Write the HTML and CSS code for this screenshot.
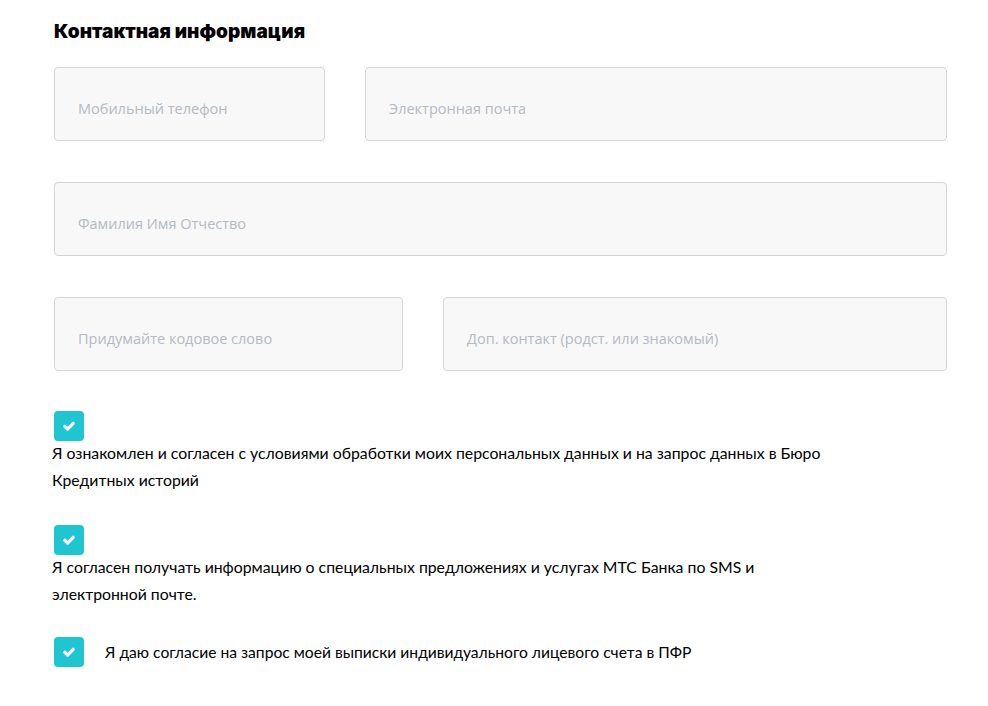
FILE: index.html
```html
<!DOCTYPE html>
<html lang="ru">
<head>
<meta charset="utf-8">
<link rel="stylesheet" href="styles.css">
</head>
<body>
<div class="page">
  <h2 class="title">Контактная информация</h2>
  <div class="row row-1">
    <div class="field"><span class="ph">Мобильный телефон</span></div>
    <div class="field"><span class="ph">Электронная почта</span></div>
  </div>
  <div class="row row-2">
    <div class="field"><span class="ph">Фамилия Имя Отчество</span></div>
  </div>
  <div class="row row-3">
    <div class="field"><span class="ph">Придумайте кодовое слово</span></div>
    <div class="field"><span class="ph">Доп. контакт (родст. или знакомый)</span></div>
  </div>

  <div class="check check-block c1">
    <span class="box"><svg viewBox="0 0 30 30" width="30" height="30"><path d="M10.8 15.3l2.8 2.8 5.6-5.8" fill="none" stroke="#fff" stroke-width="3.2" stroke-linecap="round" stroke-linejoin="round"/></svg></span>
    <p class="label">Я ознакомлен и согласен с условиями обработки моих персональных данных и на запрос данных в Бюро<br>Кредитных историй</p>
  </div>
  <div class="check check-block c2">
    <span class="box"><svg viewBox="0 0 30 30" width="30" height="30"><path d="M10.8 15.3l2.8 2.8 5.6-5.8" fill="none" stroke="#fff" stroke-width="3.2" stroke-linecap="round" stroke-linejoin="round"/></svg></span>
    <p class="label">Я согласен получать информацию о специальных предложениях и услугах МТС Банка по SMS и<br>электронной почте.</p>
  </div>
  <div class="check check-inline c3">
    <span class="box"><svg viewBox="0 0 30 30" width="30" height="30"><path d="M10.8 15.3l2.8 2.8 5.6-5.8" fill="none" stroke="#fff" stroke-width="3.2" stroke-linecap="round" stroke-linejoin="round"/></svg></span>
    <p class="label">Я даю согласие на запрос моей выписки индивидуального лицевого счета в ПФР</p>
  </div>
</div>
</body>
</html>
```

FILE: styles.css
```css
html, body {
  margin: 0;
  padding: 0;
  background: #fff;
}
.page {
  padding: 20px 41px 0 54px;
  font-family: Lato, "Open Sans", sans-serif;
  color: #000;
}
.title {
  margin: 0 0 23px;
  font-family: Inter, "DejaVu Sans", sans-serif;
  font-weight: 900;
  font-size: 19px;
  line-height: 24px;
  letter-spacing: 0.05px;
}
.row {
  display: grid;
  column-gap: 40px;
  margin-bottom: 41px;
}
.row-1 { grid-template-columns: 271px 1fr; }
.row-2 { grid-template-columns: 1fr; }
.row-3 { grid-template-columns: 349px 1fr; margin-bottom: 40px; }
.field {
  box-sizing: border-box;
  height: 74px;
  border: 1px solid #d3d5d8;
  border-radius: 4px;
  background: #f8f8f8;
  display: flex;
  align-items: center;
  padding-left: 23px;
}
.ph {
  font-family: "Open Sans", sans-serif;
  font-size: 14.5px;
  color: #b3bac3;
  padding-top: 8px;
}
.box {
  display: block;
  width: 30px;
  height: 30px;
  border-radius: 4px;
  background: #1fc5d1;
  flex: none;
}
.box svg { display: block; }
.label {
  margin: 0;
  font-size: 15.8px;
  line-height: 26.5px;
}
.check-block .label {
  margin-left: -2px;
  margin-top: -1px;
}
.c1 { margin-bottom: 32px; }
.c2 { margin-bottom: 30px; }
.check-inline {
  display: flex;
  align-items: center;
  gap: 21px;
}
.check-inline .label {
  font-size: 15.65px;
}
```
